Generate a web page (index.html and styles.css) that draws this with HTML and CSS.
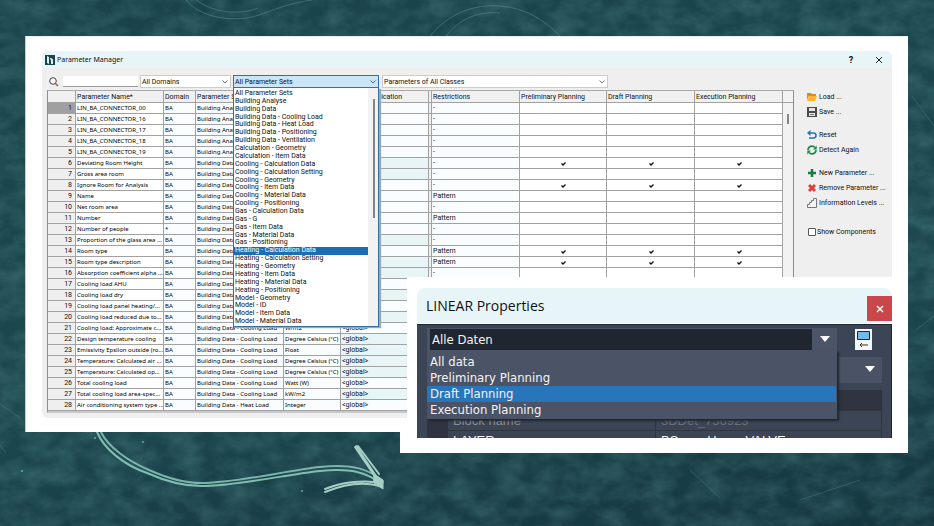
FILE: index.html
```html
<!DOCTYPE html>
<html lang="en">
<head>
<meta charset="utf-8">
<title>Parameter Manager</title>
<link rel="stylesheet" href="styles.css">
</head>
<body>
<main class="board">
  <svg class="chalk" aria-hidden="true" width="934" height="526" viewBox="0 0 934 526">
    <defs>
      <filter id="grain" x="0" y="0" width="100%" height="100%">
        <feTurbulence type="fractalNoise" baseFrequency="0.04 0.06" numOctaves="5" seed="8"/>
        <feColorMatrix values="0 0 0 0 .2  0 0 0 0 .5  0 0 0 0 .5  .4 0 0 0 -.12"/>
      </filter>
    </defs>
    <rect width="934" height="526" filter="url(#grain)"/>
    <g fill="none" stroke="#5f9d9a" stroke-opacity=".45">
      <path d="M186 0C200 18 236 24 262 14S300 2 312 0M196 0c16 12 42 16 62 8M430 36C450 12 476 4 500 6s42 12 60 30M446 36c14-18 34-25 54-23"/>
      <path d="M0 404l20 14M0 445l6 8M912 96l22 30M916 330l18-14M690 470l30 28M800 500l60-20" stroke-opacity=".3"/>
    </g>
    <g fill="none" stroke-linecap="round">
      <path d="M97 432C104 449 124 465 147 473C165 481 185 487 206 486C240 485 290 474 320 471C350 468 368 472 382 485" stroke="#8fd3c2" stroke-width="2" stroke-opacity=".85"/>
      <path d="M101 432C108 447 128 461 149 470C167 478 187 484 206 483C240 482 290 470 320 467C350 464 370 468 383 482" stroke="#9ad6c8" stroke-width="2" stroke-opacity=".75"/>
      <path d="M356 446L382 485M355 447L376 478M358 446L379 474" stroke="#a5cfc4" stroke-width="2"/>
      <path d="M325 492C340 486 362 480 382 487M325 489C340 483 362 479 382 483" stroke="#a5cfc4" stroke-width="2"/>
      <path d="M374 474L383 480V489L374 483Z" fill="#a5cfc4" stroke="#a5cfc4"/>
    </g>
    <g fill="#4fb6a6"><circle cx="95" cy="438" r="1"/><circle cx="143" cy="442" r="1"/><circle cx="22" cy="471" r="1"/><circle cx="302" cy="491" r="1"/></g>
  </svg>

  <section class="sheet">
    <div class="window">
      <header class="titlebar">
        <svg class="logo" viewBox="0 0 10 10" width="10" height="10"><rect width="10" height="10" fill="#17454e"/><path d="M2 1l2 1v7L2 8zM5 3c2 0 3 1 3 2v4H6V5L5 4z" fill="#d9f3f2"/></svg>
        <h1>Parameter Manager</h1>
        <button class="help" aria-label="Help">?</button>
        <button class="close" aria-label="Close"><svg viewBox="0 0 8 8" width="8" height="8"><path d="M1 1l6 6M7 1L1 7" stroke="#222" fill="none"/></svg></button>
      </header>
      <div class="toolbar">
        <svg class="lens" viewBox="0 0 10 10" width="10" height="10"><circle cx="4" cy="4" r="3.3" fill="#f8f8f8" stroke="#444"/><path d="M6.500 6.500L9 9" stroke="#a35b35" stroke-width="1.500"/></svg>
        <input class="search" type="text" aria-label="Search">
        <div class="combo combo-domain">
          <select aria-label="Domain"><option>All Domains</option></select>
          <svg viewBox="0 0 6 4" width="6" height="4"><path d="M.5.5L3 3 5.500.5" fill="none" stroke="#777"/></svg>
        </div>
        <div class="combo combo-set">
          <select aria-label="Parameter set"><option>All Parameter Sets</option></select>
          <svg viewBox="0 0 6 4" width="6" height="4"><path d="M.5.5L3 3 5.500.5" fill="none" stroke="#567"/></svg>
          <div class="popup">
            <ul id="sets"></ul>
            <div class="track"><div class="thumb"></div></div>
          </div>
        </div>
        <div class="combo combo-class">
          <select aria-label="Class"><option>Parameters of All Classes</option></select>
          <svg viewBox="0 0 6 4" width="6" height="4"><path d="M.5.5L3 3 5.500.5" fill="none" stroke="#777"/></svg>
        </div>
      </div>
      <div class="content">
        <div class="grid">
          <table>
            <colgroup><col class="c-num"><col class="c-wide"><col class="c-domain"><col class="c-wide"><col class="c-unit"><col class="c-wide"><col class="c-split"><col class="c-wide"><col class="c-plan"><col class="c-wide"><col class="c-wide"></colgroup>
            <thead><tr><th></th><th>Parameter Name*</th><th>Domain</th><th>Parameter Set</th><th>Unit</th><th class="app">Application</th><th></th><th>Restrictions</th><th>Preliminary Planning</th><th>Draft Planning</th><th>Execution Planning</th></tr></thead>
            <tbody id="rows"></tbody>
          </table>
          <div class="scroll"><div class="scroll-head"></div><div class="scroll-thumb"></div></div>
        </div>
        <aside class="actions">
          <button><svg viewBox="0 0 10 10" width="10" height="10"><path d="M0 1h4l1 1h4v2H2L0 8z" fill="#e08c12"/><path d="M2.500 4H10L8 9H0z" fill="#ffb52e"/></svg>Load ...</button>
          <button class="last"><svg viewBox="0 0 10 10" width="10" height="10"><path d="M0 0h10v10H0z" fill="#4a4a4a"/><path d="M2 1h6v3H2zM2 6h6v3H2z" fill="#e6e6e6"/><path d="M3 7.500h4" stroke="#777"/></svg>Save ...</button>
          <button><svg viewBox="0 0 10 10" width="10" height="10"><path d="M1 3h5.500a2.300 2.300 0 0 1 0 5H2" fill="none" stroke="#2374b9" stroke-width="1.500"/><path d="M0 3L3.500 0v6z" fill="#2374b9"/></svg>Reset</button>
          <button class="last"><svg viewBox="0 0 10 10" width="10" height="10"><path d="M1 5a4 4 0 0 1 7-2.500M9 5a4 4 0 0 1-7 2.500" fill="none" stroke="#208a4b" stroke-width="1.700"/><path d="M9.700.5v4H6zM.3 9.500v-4H4z" fill="#208a4b"/></svg>Detect Again</button>
          <button><svg viewBox="0 0 10 10" width="10" height="10"><path d="M5 1v8M1 5h8" stroke="#158043" stroke-width="2.500"/></svg>New Parameter ...</button>
          <button><svg viewBox="0 0 10 10" width="10" height="10"><path d="M2 2l6 6M8 2L2 8" stroke="#e0403c" stroke-width="3"/></svg>Remove Parameter ...</button>
          <button class="last levels"><svg viewBox="0 0 10 10" width="10" height="10"><path d="M.5 9.500v-3h2v-2h2v-2h2v-2h3v9z" fill="#f4f4f4" stroke="#777"/></svg>Information Levels ...</button>
          <label><input type="checkbox">Show Components</label>
        </aside>
      </div>
    </div>
  </section>

  <section class="inset">
    <div class="palette">
      <header class="palette-title"><h2>LINEAR Properties</h2><button aria-label="Close palette"><svg viewBox="0 0 8 8" width="8" height="8"><path d="M1 1l6 6M7 1L1 7" stroke="#fff" stroke-width="1.500"/></svg></button></header>
      <div class="palette-body">
        <div class="picker-row">
          <div class="picker">
            <select aria-label="Data set"><option>Alle Daten</option></select>
            <svg viewBox="0 0 10 6" width="10" height="6"><path d="M0 0h10L5 6z" fill="#fff"/></svg>
            <ul class="choices"><li>All data</li><li>Preliminary Planning</li><li class="on">Draft Planning</li><li>Execution Planning</li></ul>
          </div>
          <button class="pick" aria-label="Pick object"><svg viewBox="0 0 17 21" width="17" height="21"><path d="M0 0h17v21H0z" fill="#f4f6f8"/><path d="M2.500 2.500h12v8h-12z" fill="#74b9ed" stroke="#1c2531"/><path d="M5 16h8M7 14l-2 2 2 2" fill="none" stroke="#333"/></svg></button>
        </div>
        <div class="type-row"><svg viewBox="0 0 10 6" width="10" height="6"><path d="M0 0h10L5 6z" fill="#fff"/></svg></div>
        <div class="group-row"></div>
        <dl class="props"><dt>Block name</dt><dd>3DDet_756923</dd><dt class="lit">LAYER</dt><dd class="lit">BS____H____VALVE</dd></dl>
      </div>
    </div>
  </section>
</main>
<script src="app.js"></script>
</body>
</html>
```
FILE: styles.css
```css
* { box-sizing: border-box; }
body { margin: 0; background: #1b424b; font: 7px/10px Roboto, "Liberation Sans", sans-serif; color: #101010; }
h1, h2, ul, dl, dd { margin: 0; padding: 0; font-weight: 400; list-style: none; }
button, select, input { font: inherit; color: inherit; margin: 0; padding: 0; border: 0; background: none; border-radius: 0; }
svg { display: block; flex: none; }

.board { position: relative; min-height: 100vh; padding: 36px 26px 0 25px; overflow: hidden; background: linear-gradient(170deg, #1a424a, #1d4850 60%, #15363f); }
.chalk { position: absolute; left: 0; top: 0; }
.sheet { position: relative; background: #fff; border-left: 1px solid #b5d3da; border-top: 1px solid #e3f0f4; padding: 14px 16px; }
.window { background: #efefef; border-radius: 6px; }

.titlebar { display: flex; align-items: center; height: 17px; padding: 0 4px 0 3px; background: #e7f5f8; border-radius: 6px 6px 0 0; }
.titlebar h1 { flex: 1; margin-left: 2px; font: 7px/16px "Noto Sans", sans-serif; }
.titlebar button { display: grid; place-items: center; width: 18px; height: 15px; }
.help { font-weight: 700; font-size: 9px; margin-right: 10px; }

.toolbar { display: flex; align-items: center; height: 22px; padding: 5px 0 0 7px; gap: 2px; }
.lens { margin-right: 2px; }
.search { width: 75px; height: 11px; background: #fff; border-bottom: 1px solid #999; }
.combo { position: relative; height: 13px; }
.combo select { width: 100%; height: 100%; padding: 0 1px; appearance: none; background: #fff; border: 1px solid #ccc; }
.combo > svg { position: absolute; right: 3px; top: 5px; }
.combo-domain { width: 91px; }
.combo-set { width: 146px; margin-right: 1px; }
.combo-class { width: 226px; }
.combo-set select { background: #cae5f8; border-color: #2874b4; }
.popup { position: absolute; z-index: 3; left: 0; top: 13px; width: 146px; height: 239px; display: flex; background: #fff; border: 1px solid #2d71ac; border-top: 0; box-shadow: 2px 1px 1px #9aa; }
.popup ul { flex: 1; display: grid; grid-template-rows: repeat(30, 1fr); padding-top: 2px; }
.popup li { padding-left: 1px; line-height: 7px; white-space: nowrap; }
.popup .on { background: #1b6db7; color: #fff; }
.track { width: 10px; background: #f2f2f2; padding: 11px 0 0 5px; }
.thumb { width: 2px; height: 119px; background: #868686; }

.content { display: flex; gap: 13px; padding: 0 4px 5px 5px; }
.grid { flex: 1; display: flex; border: 1px solid #8e8e8e; border-top-color: #aaa; border-bottom: 2px solid #c9c9c9; background: #fff; }
table { flex: 1; width: 0; table-layout: fixed; border-collapse: separate; border-spacing: 0; }
th, td { height: 11px; padding: 1px 0 0 1px; overflow: hidden; white-space: nowrap; text-align: left; font-weight: 400; line-height: 9px; border-right: 1px solid #a2a2a2; border-bottom: 1px solid #a2a2a2; }
th { height: 12px; line-height: 10px; background: #f0f0f0; }
th.app { padding-left: 26px; }
td { background: #fff; }
td.text { font: 6px/9px "Noto Sans", "Liberation Sans", sans-serif; color: #000; }
td.num { background: #efefef; text-align: right; padding-right: 3px; }
tr:first-child td.num { background: #a0a0a0; }
td.tint { background: #fafdff; }
td.teal { background: #e8f5f7; }
td.split { background: #f0f0f0; }
td svg { margin: 0 auto; }
.c-num { width: 28px; }
.c-wide { width: 88px; }
.c-domain { width: 32px; }
.c-unit { width: 57px; }
.c-split { width: 3px; }
.c-plan { width: 87px; }
.scroll { width: 10px; background: #f2f2f2; }
.scroll-head { height: 12px; border-bottom: 1px solid #a2a2a2; }
.scroll-thumb { width: 2px; height: 10px; margin: 11px 0 0 4px; background: #868686; }

.actions { width: 81px; margin-top: -1px; display: flex; flex-direction: column; align-items: flex-start; }
.actions button { display: flex; align-items: center; gap: 2px; height: 15px; white-space: nowrap; }
.actions .last { margin-bottom: 8px; }
.actions .levels { margin-bottom: 17px; }
.actions label { display: flex; align-items: center; gap: 1px; white-space: nowrap; }
.actions input { appearance: none; width: 8px; height: 8px; background: #fff; border: 1px solid #555; border-radius: 1px; margin-left: 1px; }

.inset { position: absolute; z-index: 5; left: 400px; right: 26px; top: 277px; padding: 11px 16px 15px 17px; background: #fff; clip-path: polygon(7px 0, 100% 0, 100% 100%, 0 100%, 0 155px, 7px 155px); }
.palette { overflow: hidden; border-radius: 8px 8px 0 0; color: #f4f4f4; font: 13px/16px "DejaVu Sans Condensed", "Noto Sans", sans-serif; }
.palette-title { display: flex; align-items: center; justify-content: space-between; height: 36px; padding-left: 9px; background: #e8f5f8; border-bottom: 1px solid #fff; color: #111; }
.palette-title h2 { font: 14px/34px "Open Sans", sans-serif; }
.palette-title button { display: grid; place-items: center; width: 25px; height: 25px; margin-top: 6px; background: #c9474b; }
.palette-body { height: 114px; padding: 3px 9px 0 10px; overflow: hidden; background: #3b4555; border-top: 1px solid #1d2632; border-right: 1px solid #1d2632; }
.picker-row { display: flex; align-items: flex-start; gap: 18px; }
.picker { position: relative; flex: 1; height: 22px; padding: 1px 25px 0 3px; background: #4c5467; }
.picker select { width: 100%; height: 21px; padding-left: 2px; appearance: none; background: #20262f; }
.picker > svg { position: absolute; right: 7px; top: 8px; }
.choices { position: absolute; z-index: 2; left: 0; right: 0; top: 22px; padding: 4px 1px 1px 0; background: #4b5366; box-shadow: 2px 2px 2px #202530; }
.choices li { padding-left: 3px; }
.choices .on { background: #2975b9; }
.pick { margin: 1px 10px 0 0; }
.type-row { display: flex; justify-content: flex-end; align-items: center; height: 26px; margin-top: 7px; padding: 0 7px 2px 0; background: #4a5265; }
.group-row { height: 21px; margin-top: 7px; background: #303440; }
.props { display: grid; grid-template-columns: 208px 1fr; border-left: 21px solid #303440; font: 13px/20px "Liberation Sans", sans-serif; color: #8b8e94; }
.props dt, .props dd { height: 20px; padding-left: 5px; border-bottom: 1px solid #303640; border-right: 1px solid #303640; }
.props dd { color: #6d7078; }
.props .lit { color: #f4f4f4; }
```
FILE: app.js
```js
const sets = ["All Parameter Sets", "Building Analyse", "Building Data", "Building Data - Cooling Load", "Building Data - Heat Load", "Building Data - Positioning", "Building Data - Ventilation", "Calculation - Geometry", "Calculation - Item Data", "Cooling - Calculation Data", "Cooling - Calculation Setting", "Cooling - Geometry", "Cooling - Item Data", "Cooling - Material Data", "Cooling - Positioning", "Gas - Calculation Data", "Gas - G", "Gas - Item Data", "Gas - Material Data", "Gas - Positioning", "Heating - Calculation Data", "Heating - Calculation Setting", "Heating - Geometry", "Heating - Item Data", "Heating - Material Data", "Heating - Positioning", "Model - Geometry", "Model - ID", "Model - Item Data", "Model - Material Data"];
document.getElementById("sets").innerHTML = sets
  .map((s) => `<li${s === "Heating - Calculation Data" ? ' class="on"' : ""}>${s}</li>`).join("");

const names = ["LIN_BA_CONNECTOR_00", "LIN_BA_CONNECTOR_16", "LIN_BA_CONNECTOR_17", "LIN_BA_CONNECTOR_18", "LIN_BA_CONNECTOR_19", "Deviating Room Height", "Gross area room", "Ignore Room for Analysis", "Name", "Net room area", "Number", "Number of people", "Proportion of the glass area ...", "Room type", "Room type description", "Absorption coefficient alpha ...", "Cooling load AHU", "Cooling load dry", "Cooling load panel heating/...", "Cooling load reduced due to...", "Cooling load: Approximate c...", "Design temperature cooling", "Emissivity Epsilon outside (ro...", "Temperature: Calculated air ...", "Temperature: Calculated op...", "Total cooling load", "Total cooling load area-spec...", "Air conditioning system type ..."];
const units = { 21: "W/m2", 22: "Degree Celsius (°C)", 23: "Float", 24: "Degree Celsius (°C)", 25: "Degree Celsius (°C)", 26: "Watt (W)", 27: "kW/m2", 28: "Integer" };
const pattern = [9, 11, 14, 15];
const planned = [6, 8, 14, 15];
const teal = [6, 7, 13, 15, 16, 18, 20, 22, 23, 24, 25, 27];
const tick = '<svg viewBox="0 0 5 4" width="5" height="4"><path d="M.5 1.500L2 3 4.500.5" fill="none" stroke="#111" stroke-width="1.300"/></svg>';

document.getElementById("rows").innerHTML = names.map((name, i) => {
  const n = i + 1;
  const set = n < 6 ? "Building Analyse" : n === 28 ? "Building Data - Heat Load" : n > 20 ? "Building Data - Cooling Load" : "Building Data";
  const plan = `<td>${planned.includes(n) ? tick : ""}</td>`;
  return `<tr><td class="num">${n}</td><td class="text">${name}</td><td class="tint text">${n === 12 ? "*" : "BA"}</td><td class="tint text">${set}</td><td class="tint text">${units[n] || ""}</td><td class="${teal.includes(n) ? "teal" : "tint"}">${n > 20 ? "&lt;global&gt;" : ""}</td><td class="split"></td><td class="tint">${n > 16 ? "" : pattern.includes(n) ? "Pattern" : "-"}</td>${plan.repeat(3)}</tr>`;
}).join("");
```
